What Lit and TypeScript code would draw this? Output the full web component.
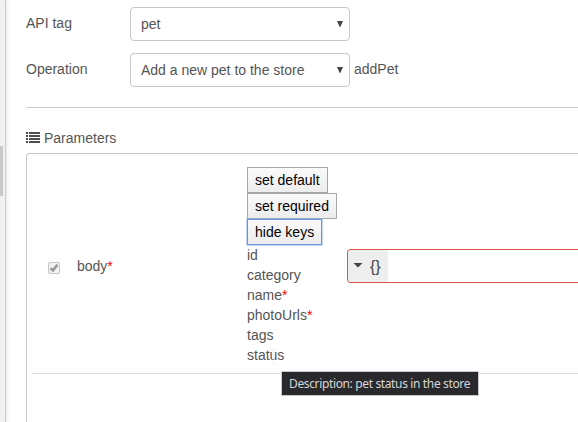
import { LitElement, html, css } from "lit";
import { customElement, property } from "lit/decorators.js";

@customElement("select-box")
class SelectBox extends LitElement {
  @property() value = "";
  static styles = css`
    :host { display: flex; box-sizing: border-box; width: 220px; height: 34px; padding: 0 6px 0 10px;
      border: 1px solid #c6c6c6; border-radius: 4px; background: #fff; align-items: center; justify-content: space-between; }
    .arrow { width: 6px; height: 6px; display: block; fill: #444; margin-top: -1px; }
  `;
  render() {
    return html`<span>${this.value}</span>
      <svg class="arrow" viewBox="0 0 6 6"><path d="M0 0H6L3.3 6H2.7Z" /></svg>`;
  }
}

@customElement("app-root")
class AppRoot extends LitElement {
  private keys = [
    { name: "id" }, { name: "category" }, { name: "name", required: true },
    { name: "photoUrls", required: true }, { name: "tags" }, { name: "status" },
  ];

  static styles = css`
    :host { display: flex; width: 578px; height: 422px; overflow: hidden; background: #fff; position: relative;
      font: 14px/20px "Liberation Sans", Arial, sans-serif; color: #555; }
    * { box-sizing: border-box; }
    .rail { flex: none; width: 6px; background: #f1f1f1; border-right: 1px solid #ccc; padding-top: 146px;
      box-shadow: 1px 0 4px rgba(0, 0, 0, 0.1); }
    .thumb { width: 3px; height: 50px; background: #c9c9c9; }
    main { flex: 1; min-width: 0; padding: 7px 0 0 20px; display: flex; flex-direction: column; }
    .field { flex: none; display: flex; height: 34px; margin-bottom: 12px; }
    .label { width: 104px; padding-top: 6px; }
    .aside { padding: 6px 0 0 4px; }
    .rule { flex: none; height: 1px; background: #ccc; margin-top: 8px; }
    .title { flex: none; display: flex; align-items: center; gap: 4px; margin-top: 20px; height: 20px; }
    .list { width: 14px; height: 11px; fill: #4d4d4d; display: block; margin-top: -1px; }
    .panel { flex: 1; margin-top: 5px; border: 1px solid #c6c6c6; border-width: 1px 0 0 1px;
      border-top-left-radius: 4px; padding-left: 5px; }
    .row { display: flex; height: 220px; align-items: center; border-bottom: 1px solid #ddd; padding-top: 4px; }
    .check { width: 12px; height: 12px; margin: 4px 17px 0 16px; border: 1px solid #c4c4c4; border-radius: 2px;
      background: #f3f3f3; }
    .check svg { display: block; width: 10px; height: 10px; fill: none; stroke: #999; stroke-width: 2.6; }
    .name { width: 170px; }
    .star { color: #f00; }
    .tools { width: 100px; display: flex; flex-direction: column; align-items: flex-start; }
    button { font: inherit; line-height: 20px; height: 26px; padding: 0 7px; margin: 0; color: #000; border: 1px solid #a6a6a6;
      border-radius: 0; background: linear-gradient(#fafafa, #ededed); white-space: nowrap; }
    button.focused { border-color: #6f94d2; box-shadow: 0 0 0 0.5px #85adeb; }
    .editor { flex: 1; height: 34px; border: 1px solid #d9534f; border-right: 0; border-radius: 4px 0 0 4px; overflow: hidden; }
    .type { width: 40px; height: 32px; background: #eee; display: flex; align-items: center; padding-left: 6px; gap: 8px;
      font-size: 16px; color: #444; }
    .type span { padding-top: 2px; }
    .caret { width: 8px; height: 5px; fill: #444; display: block; }
    .pointer { position: absolute; left: 270px; top: 349px; width: 8px; height: 16px; fill: none; stroke: #eee; }
    .tip { position: absolute; left: 281px; top: 371px; width: 198px; height: 25px; border: 1px solid #c9c9cb;
      background: #29292d; color: #d6d6d6; font: 12px/23px "Noto Sans", "Open Sans", sans-serif; letter-spacing: -0.36px;
      padding-left: 7px; white-space: nowrap; }
  `;

  render() {
    const star = html`<span class="star">*</span>`;
    return html`
      <div class="rail"><div class="thumb"></div></div>
      <main>
        <div class="field"><div class="label">API tag</div><select-box value="pet"></select-box></div>
        <div class="field"><div class="label">Operation</div>
          <select-box value="Add a new pet to the store"></select-box><div class="aside">addPet</div></div>
        <div class="rule"></div>
        <div class="title">
          <svg class="list" viewBox="0 0 14 11" shape-rendering="crispEdges">
            <path d="M0 0h2v2H0zM3 0h11v2H3zM0 3h2v2H0zM3 3h11v2H3zM0 6h2v2H0zM3 6h11v2H3zM0 9h2v2H0zM3 9h11v2H3z" />
          </svg>
          <span>Parameters</span>
        </div>
        <div class="panel">
          <div class="row">
            <div class="check"><svg viewBox="0 0 10 10"><path d="M1.5 5.2L4 7.4L8.5 1.8" /></svg></div>
            <div class="name">body${star}</div>
            <div class="tools">
              <button>set default</button>
              <button>set required</button>
              <button class="focused">hide keys</button>
              ${this.keys.map((k) => html`<div>${k.name}${k.required ? star : ""}</div>`)}
            </div>
            <div class="editor"><div class="type">
              <svg class="caret" viewBox="0 0 8 5"><path d="M0 0H8V0.6L4 4.6L0 0.6Z" /></svg>
              <span>{}</span>
            </div></div>
          </div>
        </div>
      </main>
      <svg class="pointer" viewBox="0 0 8 16"><path d="M0.5 0.5H3M5 0.5H7.5M4 1V15M0.5 15.5H3M5 15.5H7.5" /></svg>
      <div class="tip">Description: pet status in the store</div>
    `;
  }
}
